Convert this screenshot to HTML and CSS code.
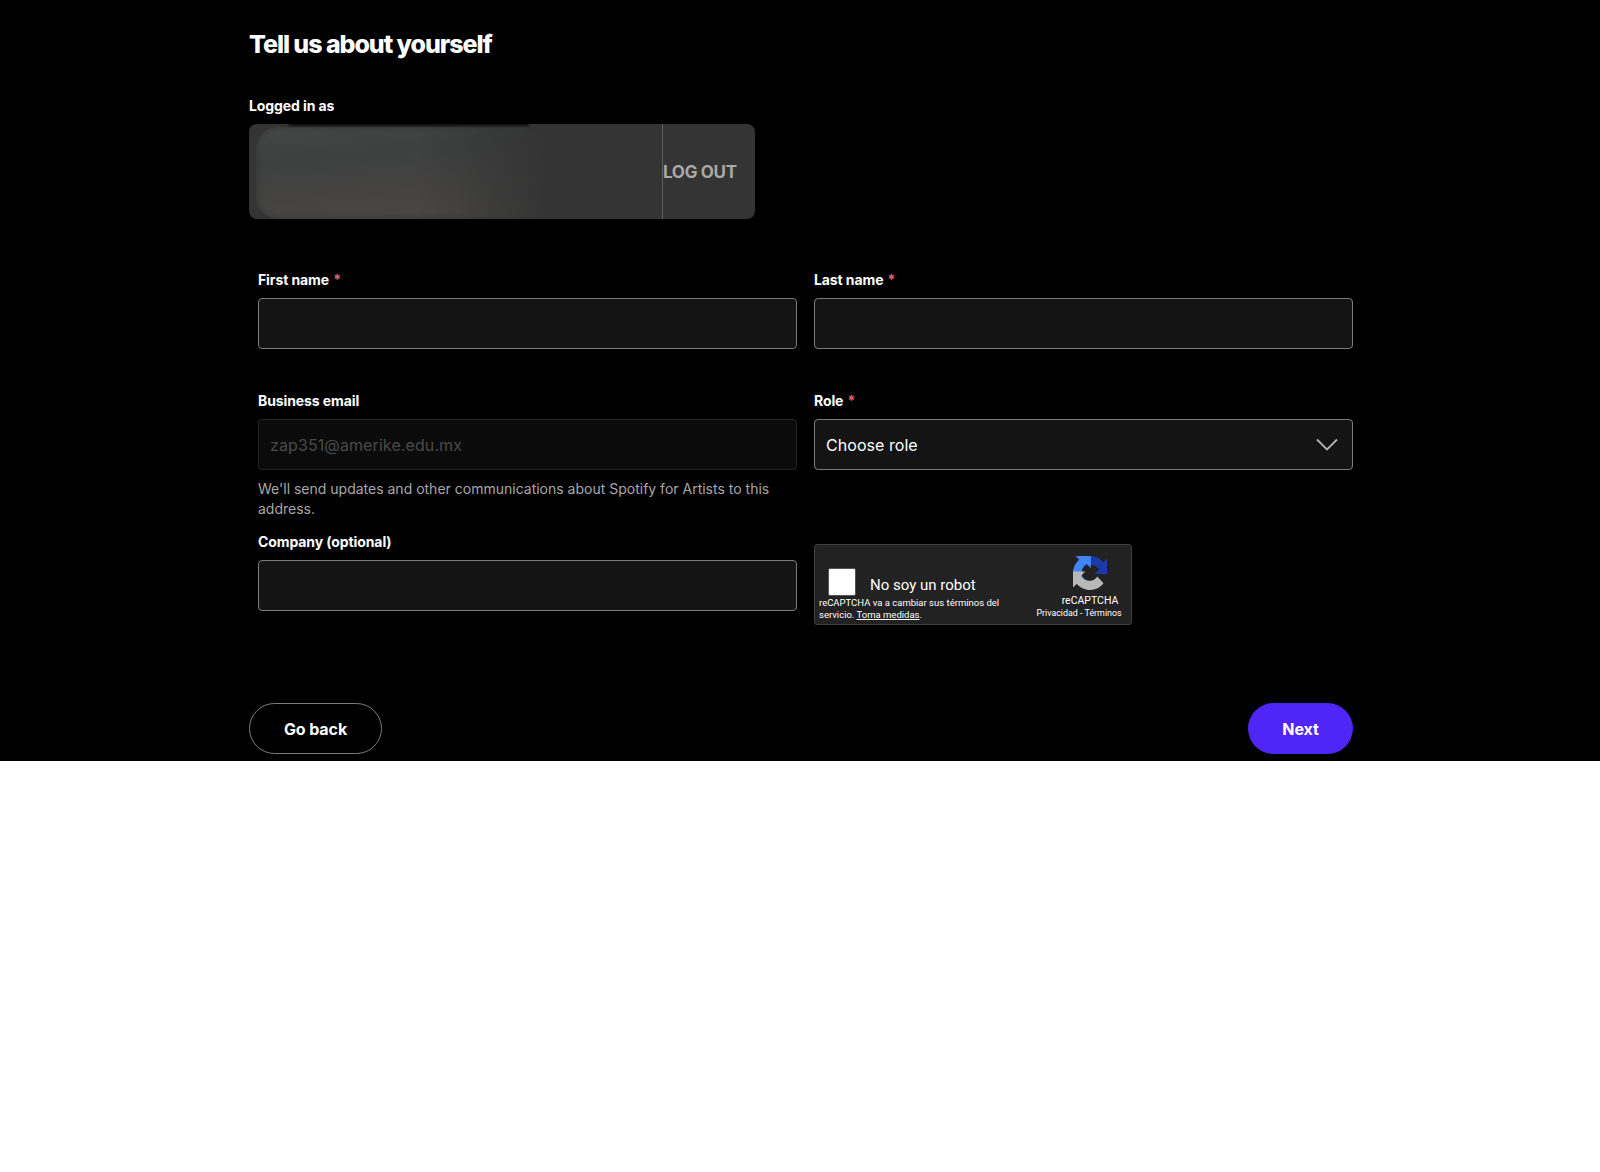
FILE: index.html
```html
<!DOCTYPE html>
<html lang="en">
<head>
    <meta charset="UTF-8">
    <title>Tell us about yourself</title>
    <link rel="stylesheet" href="styles.css">
</head>
<body>
    <div class="page">
        <h1 class="title">Tell us about yourself</h1>

        <div class="account-label">Logged in as</div>
        <div class="account">
            <div class="account-name">
                <div class="smear"></div>
                <div class="smear-edge"></div>
            </div>
            <button class="logout">LOG OUT</button>
        </div>

        <div class="form">
            <div class="field">
                <label class="label">First name <span class="req">*</span></label>
                <input class="input" type="text">
            </div>
            <div class="field">
                <label class="label">Last name <span class="req">*</span></label>
                <input class="input" type="text">
            </div>

            <div class="field">
                <label class="label">Business email</label>
                <input class="input input-disabled" type="text" value="zap351@amerike.edu.mx" disabled>
                <p class="help">We'll send updates and other communications about Spotify for Artists to this address.</p>
            </div>
            <div class="field">
                <label class="label">Role <span class="req">*</span></label>
                <div class="input select">
                    <span>Choose role</span>
                    <svg class="chevron" width="22" height="13" viewBox="0 0 22 13">
                        <path d="M1 1.5 L11 11.5 L21 1.5" fill="none" stroke="#b3b3b3" stroke-width="1.8"/>
                    </svg>
                </div>
            </div>

            <div class="field">
                <label class="label">Company (optional)</label>
                <input class="input" type="text">
            </div>
            <div class="field">
                <div class="captcha">
                    <div class="captcha-left">
                        <div class="captcha-check">
                            <div class="checkbox"></div>
                            <span class="captcha-text">No soy un robot</span>
                        </div>
                        <p class="captcha-note">reCAPTCHA va a cambiar sus términos del servicio. <u>Toma medidas</u>.</p>
                    </div>
                    <div class="captcha-right">
                        <svg class="captcha-logo" width="34" height="34" viewBox="0 0 64 64">
                            <path d="M64 31.955l-.033-1.37V4.687l-7.16 7.16C50.948 4.674 42.033.093 32.05.093c-10.4 0-19.622 4.96-25.458 12.64l11.736 11.86a15.55 15.55 0 0 1 4.754-5.334c2.05-1.6 4.952-2.906 9.968-2.906.606 0 1.074.07 1.418.2 6.2.49 11.604 3.915 14.79 8.885l-8.3 8.31 32.01.02" fill="#1c3aa9"/>
                            <path d="M31.908.002l-1.37.033H4.64l7.16 7.16C4.63 13.05.05 21.965.05 31.95c0 10.4 4.96 19.622 12.64 25.458l11.86-11.736a15.55 15.55 0 0 1-5.334-4.754c-1.6-2.05-2.906-4.952-2.906-9.968 0-.606.07-1.074.2-1.418.49-6.2 3.915-11.604 8.885-14.79l8.31 8.3.02-32.01" fill="#4285f4"/>
                            <path d="M.002 31.997l.033 1.37v25.9l7.16-7.16c5.86 7.173 14.774 11.754 24.76 11.754 10.4 0 19.622-4.96 25.458-12.64L45.677 38.37a15.55 15.55 0 0 1-4.754 5.334c-2.05 1.6-4.952 2.906-9.968 2.906-.606 0-1.074-.07-1.418-.2-6.2-.49-11.604-3.915-14.79-8.885l8.3-8.31-32.01-.02" fill="#b8b8b8"/>
                        </svg>
                        <div class="captcha-brand">reCAPTCHA</div>
                        <div class="captcha-links">Privacidad - Términos</div>
                    </div>
                </div>
            </div>
        </div>

        <div class="actions">
            <button class="btn btn-back">Go back</button>
            <button class="btn btn-next">Next</button>
        </div>
    </div>
</body>
</html>
```

FILE: styles.css
```css
* {
    box-sizing: border-box;
    margin: 0;
    padding: 0;
    font-family: 'Inter', 'Liberation Sans', sans-serif;
}

body {
    background-color: #fff;
}

.page {
    background-color: #000;
    color: #fff;
    height: 761px;
    padding: 28px 247px 0 249px;
}

.title {
    font-size: 25px;
    line-height: 32px;
    font-weight: 800;
    letter-spacing: -1.05px;
    margin-bottom: 34px;
}

.account-label {
    font-size: 14px;
    line-height: 24px;
    font-weight: 700;
    letter-spacing: -0.1px;
    margin-bottom: 6px;
}

.account {
    display: flex;
    width: 506px;
    height: 95px;
    background-color: #343434;
    border-radius: 8px;
    overflow: hidden;
}

.account-name {
    flex: 1;
    position: relative;
    overflow: hidden;
    border-right: 1px solid #5e5e5e;
}

.smear {
    position: absolute;
    left: 7px;
    top: 3px;
    width: 295px;
    height: 92px;
    border-radius: 22px;
    background: linear-gradient(175deg, #464848 0%, #3e4040 30%, #454443 65%, #4c4a48 100%);
    -webkit-mask-image: linear-gradient(to right, #000 55%, transparent 100%);
    mask-image: linear-gradient(to right, #000 55%, transparent 100%);
    filter: blur(4px);
}

.smear-edge {
    position: absolute;
    left: 40px;
    top: -1px;
    width: 240px;
    height: 3px;
    background-color: #0c0c0c;
    filter: blur(1px);
}

.logout {
    width: 92px;
    background: none;
    border: none;
    color: #a9a9a9;
    font-size: 17px;
    font-weight: 700;
    letter-spacing: -0.3px;
    text-align: left;
}

.form {
    display: grid;
    grid-template-columns: 539px 539px;
    column-gap: 17px;
    margin: 49px 0 0 9px;
}

.field {
    display: flex;
    flex-direction: column;
    align-items: flex-start;
    margin-bottom: 11px;
}

.field:nth-child(-n+2) {
    margin-bottom: 40px;
}

.label {
    display: block;
    font-size: 14px;
    line-height: 24px;
    font-weight: 700;
    letter-spacing: -0.1px;
    margin-bottom: 6px;
}

.req {
    color: #f15e6c;
    margin-left: 1px;
}

.input {
    width: 100%;
    height: 51px;
    background-color: #141414;
    border: 1px solid #7c7c7c;
    border-radius: 4px;
    padding: 0 11px;
    color: #fff;
    font-size: 16px;
}

.input-disabled {
    background-color: #0b0b0b;
    border-color: #242424;
    color: #4a4a4a;
    letter-spacing: 0.1px;
}

.select {
    display: flex;
    align-items: center;
    justify-content: space-between;
    letter-spacing: 0.05px;
}

.chevron {
    margin-right: 3px;
}

.help {
    font-size: 14px;
    line-height: 20px;
    color: #a7a7a7;
    margin-top: 9px;
}

.captcha {
    display: flex;
    justify-content: space-between;
    width: 318px;
    height: 81px;
    margin-top: 14px;
    background-color: #222;
    border: 1px solid #3f3f3f;
    border-radius: 3px;
}

.captcha * {
    font-family: 'Roboto', 'Liberation Sans', sans-serif;
}

.captcha-left {
    width: 192px;
    padding: 23px 0 0 4px;
}

.captcha-check {
    display: flex;
    align-items: center;
    height: 28px;
    padding-left: 9px;
}

.checkbox {
    width: 28px;
    height: 28px;
    background-color: #fff;
    border: 1px solid #555;
    border-radius: 2px;
    margin-right: 14px;
}

.captcha-text {
    font-size: 15px;
    color: #fff;
    position: relative;
    top: 3px;
}

.captcha-note {
    font-size: 9.5px;
    line-height: 12px;
    color: #fff;
    margin-top: 1px;
}

.captcha-right {
    width: 100px;
    display: flex;
    flex-direction: column;
    align-items: center;
    padding-top: 11px;
    padding-right: 4px;
    color: #fff;
}

.captcha-logo {
    margin-left: 22px;
}

.captcha-brand {
    font-size: 10.5px;
    line-height: 12px;
    margin-top: 5px;
    padding-left: 22px;
}

.captcha-links {
    font-size: 8.9px;
    line-height: 10px;
    margin-top: 1px;
    white-space: nowrap;
}

.actions {
    display: flex;
    justify-content: space-between;
    margin-top: 67px;
}

.btn {
    height: 51px;
    border-radius: 26px;
    color: #fff;
    font-size: 16px;
    font-weight: 700;
    letter-spacing: -0.1px;
    cursor: pointer;
}

.btn-back {
    width: 133px;
    background: #000;
    border: 1px solid #7c7c7c;
}

.btn-next {
    width: 105px;
    background-color: #4f26f5;
    border: none;
}
```
